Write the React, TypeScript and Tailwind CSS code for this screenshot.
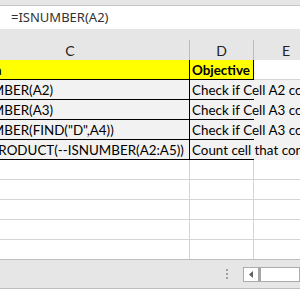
const rows = [
  { c: '=ISNUMBER(A2)', d: 'Check if Cell A2 contains a number' },
  { c: '=ISNUMBER(A3)', d: 'Check if Cell A3 contains a number' },
  { c: '=ISNUMBER(FIND("D",A4))', d: 'Check if Cell A3 contains D' },
  { c: '=SUMPRODUCT(--ISNUMBER(A2:A5))', d: 'Count cell that contains numbers' },
]

const cellFont = { fontFamily: 'Lato, "Liberation Sans", sans-serif' }

export default function App() {
  return (
    <div className="flex h-[289px] w-[300px] flex-col overflow-hidden bg-[#e6e6e6]">
      {/* Ribbon edge */}
      <div className="h-[6px] shrink-0 border-b border-[#c6c6c6] bg-[#e6e6e6]" />

      {/* Formula bar */}
      <div
        className="flex h-[23px] shrink-0 items-center bg-white pl-[11px] text-[13px] text-[#333]"
        style={{ fontFamily: '"Noto Sans", sans-serif' }}
      >
        =ISNUMBER(A2)
      </div>

      <div className="h-[11px] shrink-0" />

      {/* Sheet */}
      <div className="ml-[-49px] flex w-[400px] flex-col text-[13.4px] text-black" style={cellFont}>
        {/* Column headers */}
        <div className="flex h-[20px] text-[14px] text-[#222]">
          <div className="flex w-[239px] items-center justify-center border-r border-[#bcbcbc]">C</div>
          <div className="flex w-[64px] items-center justify-center border-r border-[#bcbcbc]">D</div>
          <div className="flex w-[64px] items-center justify-center">E</div>
        </div>

        {/* Header row */}
        <div className="flex h-[20px] bg-white">
          <div className="w-[239px] whitespace-nowrap border-r border-b border-black bg-[#ffff00] pl-[2px] pt-[1px] font-bold leading-[19px]">
            Formula
          </div>
          <div className="w-[64px] whitespace-nowrap border-r border-b border-black bg-[#ffff00] pl-[2px] pt-[1px] font-bold leading-[19px]">
            Objective
          </div>
          <div className="flex-1 border-b border-[#d4d4d4]" />
        </div>

        {rows.map((r) => (
          <div key={r.c} className="flex h-[20px] bg-[#f2f2f2]">
            <div className="w-[239px] overflow-hidden whitespace-nowrap border-r border-b border-black pl-[2px] pt-[1px] leading-[19px]">
              {r.c}
            </div>
            <div className="w-[64px] whitespace-nowrap border-b border-black pl-[2px] pt-[1px] leading-[19px]">
              {r.d}
            </div>
            <div className="flex-1" />
          </div>
        ))}

        {[0, 1, 2, 3, 4].map((i) => (
          <div
            key={i}
            className={`flex bg-white ${i < 4 ? 'h-[20px] border-b border-[#d4d4d4]' : 'h-[19px]'}`}
          >
            <div className="w-[239px] border-r border-[#d4d4d4]" />
            <div className="w-[64px] border-r border-[#d4d4d4]" />
            <div className="flex-1" />
          </div>
        ))}
      </div>

      {/* Sheet tabs / scrollbar strip */}
      <div className="flex h-[30px] shrink-0 items-center border-t border-b border-[#bdbdbd] bg-[#e6e6e6]">
        <div className="ml-[226px] flex flex-col gap-[2px]">
          <span className="h-[2px] w-[2px] bg-[#a0a0a0]" />
          <span className="h-[2px] w-[2px] bg-[#a0a0a0]" />
          <span className="h-[2px] w-[2px] bg-[#a0a0a0]" />
        </div>
        <div className="ml-[15px] flex h-[15px] flex-1 border border-[#ababab] bg-white">
          <div className="flex w-[14px] items-center justify-center">
            <svg width="6" height="7" viewBox="0 0 6 7">
              <path d="M5 0 L1 3.5 L5 7 Z" fill="#606060" />
            </svg>
          </div>
          <div className="w-[3px] bg-[#a6a6a6]" />
        </div>
      </div>
    </div>
  )
}
